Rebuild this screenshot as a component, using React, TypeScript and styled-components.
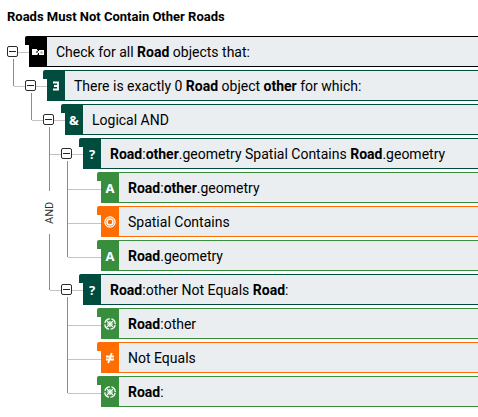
import React, { useState } from "react";
import styled, { createGlobalStyle } from "styled-components";

const GlobalStyle = createGlobalStyle`
  *, *::before, *::after { box-sizing: border-box; }
  body {
    margin: 0;
    background: #fff;
    color: #000;
    font-family: Roboto, "Liberation Sans", sans-serif;
    font-size: 14px;
    overflow-x: hidden;
  }
`;

const Page = styled.main`
  padding: 9px 0 0 7px;
`;

const Title = styled.h1`
  margin: 0 0 11px;
  font-size: 13px;
  line-height: 16px;
  font-weight: 700;
`;

const Tree = styled.ul`
  list-style: none;
  margin: 0;
  padding: 0;
`;

const Group = styled.div`
  position: relative;
`;

const Branch = styled(Tree)`
  padding-left: 18px;
`;

const Item = styled.li<{ $leaf: boolean }>`
  position: relative;

  ${Branch} > &::before {
    content: "";
    position: absolute;
    left: -12px;
    top: 0;
    bottom: 0;
    border-left: 1px solid #8c8c8c;
  }
  ${Branch} > &:first-child::before {
    top: -11px;
  }
  ${Branch} > &:last-child::before {
    bottom: auto;
    height: ${(p) => (p.$leaf ? 17 : 16)}px;
  }
  ${Branch} > &:first-child:last-child::before {
    height: 27px;
  }
  &::after {
    content: "";
    position: absolute;
    left: 11px;
    top: ${(p) => (p.$leaf ? 17 : 16)}px;
    width: 11px;
    border-top: 1px solid #c4c4c4;
  }
  ${Branch} > &::after {
    left: -11px;
    width: 33px;
  }
`;

const Row = styled.div`
  display: flex;
  align-items: flex-start;
  padding-bottom: 3px;
`;

const ToggleSlot = styled.div`
  flex: none;
  width: 22px;
  padding-top: 10px;
`;

const Toggle = styled.button`
  position: relative;
  z-index: 1;
  display: flex;
  align-items: center;
  justify-content: center;
  width: 11px;
  height: 11px;
  padding: 0;
  border: 1px solid #2b2b2b;
  border-radius: 2px;
  background: #fff;
  cursor: pointer;
`;

const Block = styled.div<{ $color: string }>`
  flex: 1;
  min-width: 0;
  display: flex;
  border: solid ${(p) => p.$color};
  border-width: 1px 0;
  background: #eaeef1;
`;

const Badge = styled.span<{ $color: string }>`
  position: relative;
  flex: none;
  display: flex;
  align-items: center;
  justify-content: center;
  width: 18px;
  background: ${(p) => p.$color};
  color: #fff;
  font: 700 13px/16px "Noto Sans", sans-serif;

  &::before {
    content: "";
    position: absolute;
    left: -4px;
    top: -1px;
    width: 5px;
    height: 9px;
    border-top-left-radius: 2px;
    background: ${(p) => p.$color};
  }
`;

const Label = styled.span`
  padding: 2px 0 0 9px;
  line-height: 27px;
  white-space: nowrap;
`;

const Operator = styled.span`
  position: absolute;
  z-index: 1;
  left: 0;
  top: 53px;
  width: 14px;
  height: 43px;
  background: #fff;
  color: #333;
  font-size: 11px;
  line-height: 14px;
  text-align: center;
  writing-mode: vertical-rl;
  transform: rotate(180deg);
`;

const Join = () => (
  <svg width="14" height="10" viewBox="0 0 14 10" aria-hidden="true">
    <path d="M1 2h5v2L5 5l1 1v2H1z" fill="#fff" />
    <path d="M6 3h1v1h1V3h5v5H8V6H7v1.500H6V6l1-1z" fill="#fff" />
    <path d="M9.500 4.500h2v2h-2z" fill="#999" />
  </svg>
);

const Exists = () => (
  <svg width="8" height="10" viewBox="0 0 8 10" aria-hidden="true">
    <path d="M1 1.500H6V8.500H1M2 5H6" fill="none" stroke="#fff" strokeWidth="1.800" />
  </svg>
);

const NotEqual = () => (
  <svg width="10" height="12" viewBox="0 0 10 12" aria-hidden="true">
    <path d="M1 4.500h8M1 7.500h8M6.800 1L3.200 11" fill="none" stroke="#fff" strokeWidth="1.800" />
  </svg>
);

const Ring = () => (
  <svg width="12" height="12" viewBox="0 0 12 12" fill="none" stroke="#fff" aria-hidden="true">
    <circle cx="6" cy="6" r="5.100" strokeWidth="1.200" />
    <circle cx="6" cy="6" r="3" strokeWidth="1.500" />
  </svg>
);

const Web = () => (
  <svg width="12" height="12" viewBox="0 0 12 12" fill="none" stroke="#fff" aria-hidden="true">
    <circle cx="6" cy="6" r="5.200" strokeWidth="1.300" strokeDasharray="6.600 1.568" strokeDashoffset="-0.784" />
    <path d="M6 3v6M3 6h6" strokeWidth="1.200" />
    <path d="M3 3l6 6M9 3l-6 6" strokeWidth="1.200" />
  </svg>
);

const BLACK = "#000";
const TEAL = "#004d40";
const GREEN = "#388e3c";
const ORANGE = "#ff6d00";

type RuleNode = {
  id: string;
  color: string;
  icon: React.ReactNode;
  label: React.ReactNode;
  operator?: string;
  children?: RuleNode[];
};

const rule: RuleNode = {
  id: "all",
  color: BLACK,
  icon: <Join />,
  label: <>Check for all <b>Road</b> objects that:</>,
  children: [{
    id: "exists",
    color: TEAL,
    icon: <Exists />,
    label: <>There is exactly 0 <b>Road</b> object <b>other</b> for which:</>,
    children: [{
      id: "and",
      color: TEAL,
      icon: "&",
      label: "Logical AND",
      operator: "AND",
      children: [
        {
          id: "contains",
          color: TEAL,
          icon: "?",
          label: <><b>Road</b>:<b>other</b>.geometry Spatial Contains <b>Road</b>.geometry</>,
          children: [
            { id: "c1", color: GREEN, icon: "A", label: <><b>Road</b>:<b>other</b>.geometry</> },
            { id: "c2", color: ORANGE, icon: <Ring />, label: "Spatial Contains" },
            { id: "c3", color: GREEN, icon: "A", label: <><b>Road</b>.geometry</> },
          ],
        },
        {
          id: "differs",
          color: TEAL,
          icon: "?",
          label: <><b>Road</b>:other Not Equals <b>Road</b>:</>,
          children: [
            { id: "d1", color: GREEN, icon: <Web />, label: <><b>Road</b>:other</> },
            { id: "d2", color: ORANGE, icon: <NotEqual />, label: "Not Equals" },
            { id: "d3", color: GREEN, icon: <Web />, label: <><b>Road</b>:</> },
          ],
        },
      ],
    }],
  }],
};

function TreeNode({ node }: { node: RuleNode }) {
  const [open, setOpen] = useState(true);
  const leaf = !node.children;
  return (
    <Item $leaf={leaf}>
      <Row>
        <ToggleSlot>
          {!leaf && (
            <Toggle
              type="button"
              aria-expanded={open}
              aria-label={open ? "Collapse" : "Expand"}
              onClick={() => setOpen(!open)}
            >
              <svg width="7" height="7" viewBox="0 0 7 7" stroke="#222" aria-hidden="true">
                <path d={open ? "M0 3.500h7" : "M0 3.500h7M3.500 0v7"} />
              </svg>
            </Toggle>
          )}
        </ToggleSlot>
        <Block $color={node.color}>
          <Badge $color={node.color}>{node.icon}</Badge>
          <Label>{node.label}</Label>
        </Block>
      </Row>
      {node.children && open && (
        <Group>
          {node.operator && <Operator>{node.operator}</Operator>}
          <Branch>
            {node.children.map((child) => (
              <TreeNode key={child.id} node={child} />
            ))}
          </Branch>
        </Group>
      )}
    </Item>
  );
}

export default function App() {
  return (
    <>
      <GlobalStyle />
      <Page>
        <Title>Roads Must Not Contain Other Roads</Title>
        <Tree>
          <TreeNode node={rule} />
        </Tree>
      </Page>
    </>
  );
}
